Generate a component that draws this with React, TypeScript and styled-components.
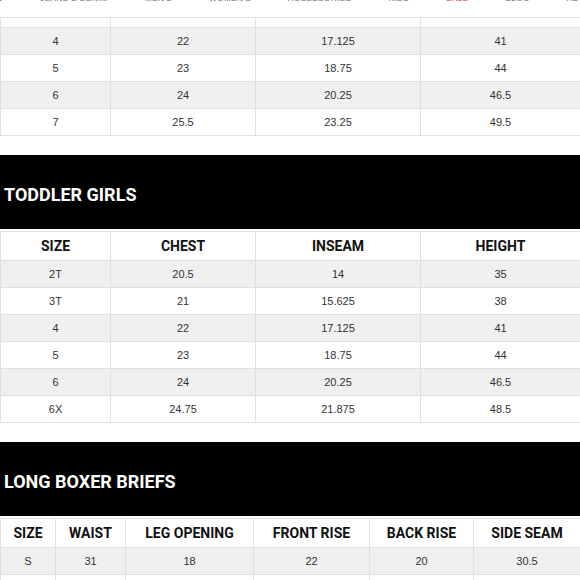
import React from 'react'
import styled, { createGlobalStyle } from 'styled-components'

const GlobalStyle = createGlobalStyle`
  body {
    margin: 0;
    background: #fff;
    overflow: hidden;
    font-family: "Liberation Sans", Arial, sans-serif;
  }
`

const Page = styled.div`
  width: 581px;
`

const Nav = styled.nav`
  height: 17px;
  overflow: hidden;
`

const NavList = styled.div`
  display: flex;
  gap: 37px;
  margin-top: -6px;
  margin-left: -17px;
  white-space: nowrap;
`

const NavItem = styled.span<{ $sale?: boolean }>`
  font-size: 8px;
  line-height: 10px;
  letter-spacing: 0.5px;
  color: ${({ $sale }) => ($sale ? '#c8323c' : '#666')};
`

const Section = styled.section`
  margin-top: 19px;
`

const Band = styled.div`
  height: 74px;
  background: #000;
  display: flex;
  align-items: center;
  padding: 4px 0 0 4px;
  box-sizing: border-box;
  margin-bottom: 2px;
`

const Title = styled.h2`
  margin: 0;
  font-family: Roboto, "Liberation Sans", sans-serif;
  font-weight: 700;
  font-size: 18px;
  color: #fff;
`

const Grid = styled.div`
  border-top: 1px solid #e0e0e0;
  border-left: 1px solid #e0e0e0;
`

const Row = styled.div<{ $cols: string; $shade?: boolean; $h?: number }>`
  display: grid;
  grid-template-columns: ${({ $cols }) => $cols};
  height: ${({ $h }) => $h ?? 27}px;
  box-sizing: border-box;
  border-bottom: 1px solid #e0e0e0;
  background: ${({ $shade }) => ($shade ? '#f0f0f0' : '#fff')};
`

const Cell = styled.div`
  display: flex;
  align-items: center;
  justify-content: center;
  border-right: 1px solid #e0e0e0;
  font-size: 11px;
  color: #333;
`

const HeadCell = styled(Cell)`
  font-family: Roboto, "Liberation Sans", sans-serif;
  font-weight: 700;
  font-size: 14px;
  color: #111;
`

const navItems = ['NEW', 'JEANS & DENIM', "MEN'S", "WOMEN'S", 'ACCESSORIES', 'KIDS', 'SALE', 'BLOG', 'ABOUT']

const kidCols = '110px 145px 165px 1fr'
const boxerCols = '55px 70px 128px 116px 104px 1fr'

const topRows = [
  ['4', '22', '17.125', '41'],
  ['5', '23', '18.75', '44'],
  ['6', '24', '20.25', '46.5'],
  ['7', '25.5', '23.25', '49.5'],
]

const girlRows = [
  ['2T', '20.5', '14', '35'],
  ['3T', '21', '15.625', '38'],
  ['4', '22', '17.125', '41'],
  ['5', '23', '18.75', '44'],
  ['6', '24', '20.25', '46.5'],
  ['6X', '24.75', '21.875', '48.5'],
]

const boxerRows = [
  ['S', '31', '18', '22', '20', '30.5'],
  ['M', '33', '19', '23', '21', '31'],
]

const SizeTable = ({ cols, head, rows, lead }: { cols: string; head?: string[]; rows: string[][]; lead?: boolean }) => (
  <Grid>
    {lead && (
      <Row $cols={cols} $h={10}>
        {cols.split(' ').map((_, i) => <Cell key={i} />)}
      </Row>
    )}
    {head && (
      <Row $cols={cols} $h={29}>
        {head.map((h) => <HeadCell key={h}>{h}</HeadCell>)}
      </Row>
    )}
    {rows.map((r, i) => (
      <Row key={i} $cols={cols} $shade={i % 2 === 0}>
        {r.map((v, j) => <Cell key={j}>{v}</Cell>)}
      </Row>
    ))}
  </Grid>
)

export default function App() {
  return (
    <Page>
      <GlobalStyle />
      <Nav>
        <NavList>
          {navItems.map((n) => (
            <NavItem key={n} $sale={n === 'SALE'}>{n}</NavItem>
          ))}
        </NavList>
      </Nav>

      <SizeTable cols={kidCols} rows={topRows} lead />

      <Section>
        <Band><Title>TODDLER GIRLS</Title></Band>
        <SizeTable cols={kidCols} head={['SIZE', 'CHEST', 'INSEAM', 'HEIGHT']} rows={girlRows} />
      </Section>

      <Section>
        <Band><Title>LONG BOXER BRIEFS</Title></Band>
        <SizeTable
          cols={boxerCols}
          head={['SIZE', 'WAIST', 'LEG OPENING', 'FRONT RISE', 'BACK RISE', 'SIDE SEAM']}
          rows={boxerRows}
        />
      </Section>
    </Page>
  )
}
